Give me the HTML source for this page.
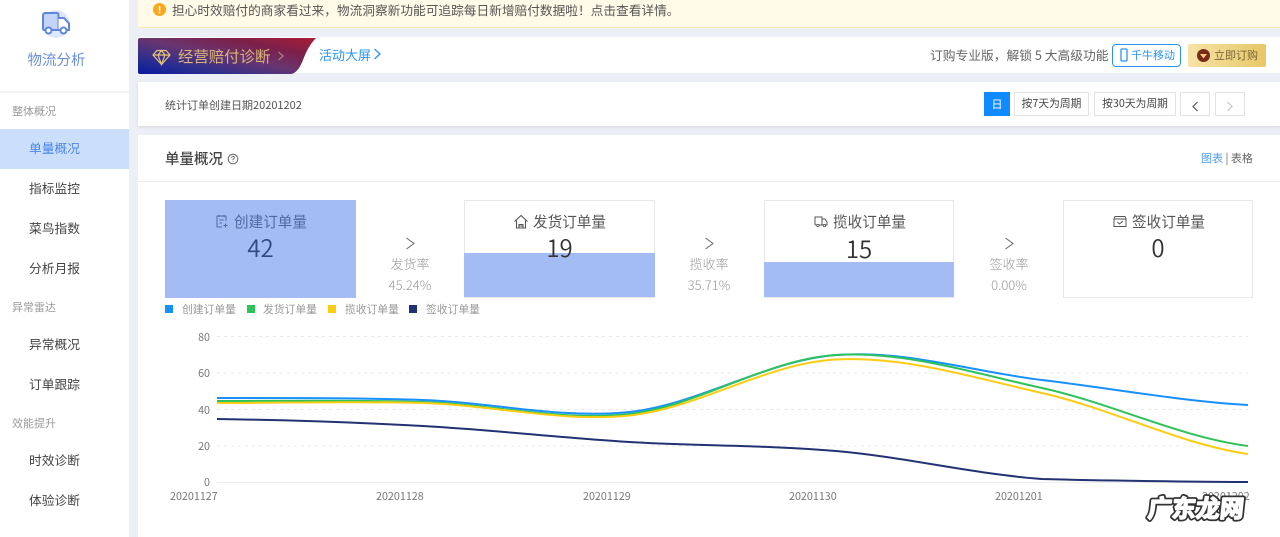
<!DOCTYPE html>
<html lang="zh-CN"><head><meta charset="utf-8"><title>物流分析</title>
<style>
html,body{margin:0;padding:0}
body{width:1280px;height:537px;overflow:hidden;position:relative;background:#eceff5;font-family:"Noto Sans CJK SC","Liberation Sans",sans-serif;color:#444}
#w{position:absolute;left:0;top:0;width:1280px;height:537px;overflow:hidden;filter:blur(.3px)}
.a{position:absolute;white-space:nowrap}
.c{text-align:center}
.side{left:0;top:0;width:129px;height:537px;background:#fff}
.mi{left:0;width:129px;height:40px;line-height:38px;font-size:12.75px;color:#444;text-indent:29px}
.gr{left:12px;font-size:11px;color:#9b9b9b;line-height:14px}
.panel{background:#fff}
.btn{border:1px solid #e3e3e3;background:#fff;font-size:10.75px;line-height:22px;height:22px;text-align:center;color:#444;box-sizing:content-box}
.card{box-sizing:border-box;width:191px;height:98px;top:200px;border:1px solid #e8e8e8;background:#fff}
.fill{background:#a3bdf4}
.ct{font-size:14.6px;color:#555;line-height:18px}
.num{font-size:24px;color:#333;line-height:28px;width:191px;text-align:center;font-weight:350}
.rt{font-size:13px;color:#999;width:80px;text-align:center;line-height:16px;font-weight:300}
.ax{font-size:10.75px;color:#777;line-height:13px}
.lg{font-size:10.8px;color:#999;line-height:14px;top:302px}
.sq{width:8px;height:8px;top:305px}
</style></head><body><div id="w">

<div class="a side"></div>
<svg class="a" style="left:40px;top:9px" width="32" height="32" viewBox="0 0 32 32">
<circle cx="16" cy="15" r="14" fill="#dfe8fa"/>
<path d="M3 6.500Q3 4 5.500 4H17Q18.500 4 18.500 6V21H4.500Q3 21 3 19.500Z" fill="#c3d4f6" stroke="#5f86d8" stroke-width="2"/>
<path d="M18.500 9H24L29 14.500V21H18.500" fill="#fff" stroke="#5f86d8" stroke-width="2"/>
<circle cx="8.500" cy="21.500" r="3" fill="#fff" stroke="#5f86d8" stroke-width="2"/>
<circle cx="23.500" cy="21.500" r="3" fill="#fff" stroke="#5f86d8" stroke-width="2"/>
</svg>
<div class="a c" style="left:0;width:113px;top:51px;font-size:14.500px;line-height:17px;color:#6b8fd9">物流分析</div>
<div class="a" style="left:0;top:91px;width:129px;height:2px;background:#f2f3f5"></div>
<div class="a gr" style="top:104px">整体概况</div>
<div class="a mi" style="top:129px;background:#cbdffa;color:#4c87ea">单量概况</div>
<div class="a mi" style="top:169px">指标监控</div>
<div class="a mi" style="top:209px">菜鸟指数</div>
<div class="a mi" style="top:249px">分析月报</div>
<div class="a gr" style="top:300px">异常雷达</div>
<div class="a mi" style="top:325px">异常概况</div>
<div class="a mi" style="top:365px">订单跟踪</div>
<div class="a gr" style="top:416px">效能提升</div>
<div class="a mi" style="top:441px">时效诊断</div>
<div class="a mi" style="top:481px">体验诊断</div>

<div class="a" style="left:138px;top:0;width:1142px;height:27px;background:#fffbe8;border-bottom:1px solid #fbe9ae"></div>
<svg class="a" style="left:153px;top:3px" width="13" height="13" viewBox="0 0 13 13"><circle cx="6.500" cy="6.500" r="6.500" fill="#f9a81e"/><rect x="5.800" y="2.800" width="1.500" height="5" fill="#fff"/><rect x="5.800" y="8.800" width="1.500" height="1.500" fill="#fff"/></svg>
<div class="a" style="left:172px;top:2px;font-size:12.7px;line-height:16px;color:#555">担心时效赔付的商家看过来，物流洞察新功能可追踪每日新增赔付数据啦！点击查看详情。</div>

<div class="a panel" style="left:138px;top:37px;width:1142px;height:36px"></div>
<svg class="a" style="left:138px;top:38px" width="180" height="36" viewBox="0 0 180 36">
<defs><linearGradient id="g" x1="0" y1="1" x2="1" y2="0"><stop offset="0" stop-color="#0a189f"/><stop offset=".22" stop-color="#2a2e90"/><stop offset=".5" stop-color="#69356f"/><stop offset=".75" stop-color="#7d1f48"/><stop offset="1" stop-color="#ab1e37"/></linearGradient></defs>
<path d="M2 0H178Q170 8 165 22Q160 35 153 36H2Q0 36 0 34V2Q0 0 2 0Z" fill="url(#g)"/>
<g fill="none" stroke="#e6c27c" stroke-width="1.200"><path d="M15 17L19 12.500H28L32 17L23.500 26.500Z"/><path d="M15 17H32M20 17L23.500 26.500L27 17L23.500 12.500L20 17"/></g>
</svg>
<div class="a" style="left:178px;top:46px;font-size:15.4px;line-height:20px;color:#d8b678">经营赔付诊断</div>
<svg class="a" style="left:277px;top:51px" width="8" height="10" viewBox="0 0 8 10"><path d="M1.500 1L6 5L1.500 9" fill="none" stroke="#b58f8f" stroke-width="1.100"/></svg>
<div class="a" style="left:319px;top:46px;font-size:13px;line-height:17px;color:#2a94f3">活动大屏</div>
<svg class="a" style="left:373px;top:48px" width="9" height="12" viewBox="0 0 9 12"><path d="M1.500 1L7 6L1.500 11" fill="none" stroke="#2a94f3" stroke-width="1.300"/></svg>

<div class="a" style="left:930px;top:46px;font-size:12.75px;line-height:17px;color:#666">订购专业版，解锁 5 大高级功能</div>
<div class="a" style="left:1112px;top:44px;width:67px;height:21px;border:1px solid #2a94f3;border-radius:4px;background:#fff"></div>
<svg class="a" style="left:1120px;top:48px" width="8" height="14" viewBox="0 0 8 14"><rect x="1" y="1" width="6" height="12" rx="1" fill="none" stroke="#2a94f3" stroke-width="1.300"/></svg>
<div class="a" style="left:1131px;top:48px;font-size:11px;line-height:15px;color:#2a94f3">千牛移动</div>
<div class="a" style="left:1188px;top:44px;width:78px;height:23px;border-radius:2px;background:linear-gradient(90deg,#f6e3a6,#e7c768)"></div>
<svg class="a" style="left:1197px;top:49px" width="13" height="13" viewBox="0 0 13 13"><circle cx="6.500" cy="6.500" r="6.500" fill="#7a2a18"/><path d="M3 5L6.500 9.500L10 5Z" fill="#f2cf7c"/></svg>
<div class="a" style="left:1214px;top:48px;font-size:11px;line-height:15px;color:#7a6534">立即订购</div>

<div class="a panel" style="left:138px;top:82px;width:1142px;height:44px;box-shadow:0 1px 3px rgba(0,0,0,.1)"></div>
<div class="a" style="left:165px;top:98px;font-size:11px;line-height:15px;color:#555">统计订单创建日期20201202</div>
<div class="a c" style="left:984px;top:92px;width:26px;height:24px;line-height:24px;background:#0f8bff;color:#fff;font-size:11px">日</div>
<div class="a btn" style="left:1014px;top:92px;width:73px">按7天为周期</div>
<div class="a btn" style="left:1094px;top:92px;width:80px">按30天为周期</div>
<div class="a btn" style="left:1180px;top:92px;width:28px"></div>
<div class="a btn" style="left:1215px;top:92px;width:28px"></div>
<svg class="a" style="left:1191px;top:101px" width="8" height="11" viewBox="0 0 8 11"><path d="M6.500 1L2 5.500L6.500 10" fill="none" stroke="#555" stroke-width="1.200"/></svg>
<svg class="a" style="left:1226px;top:101px" width="8" height="11" viewBox="0 0 8 11"><path d="M1.500 1L6 5.500L1.500 10" fill="none" stroke="#c4c4c4" stroke-width="1.200"/></svg>

<div class="a panel" style="left:138px;top:135px;width:1142px;height:402px"></div>
<div class="a" style="left:165px;top:150px;font-size:14.5px;line-height:18px;font-weight:500;color:#444">单量概况</div>
<svg class="a" style="left:227px;top:153px" width="12" height="12" viewBox="0 0 12 12"><circle cx="6" cy="6" r="4.800" fill="none" stroke="#666" stroke-width="1"/><path d="M4.500 4.800Q4.800 3.400 6 3.400Q7.500 3.500 7.400 4.800Q7.300 5.600 6 6.300V7" fill="none" stroke="#666" stroke-width=".9"/><rect x="5.600" y="7.800" width=".9" height=".9" fill="#666"/></svg>
<div class="a" style="left:1201px;top:151px;font-size:11px;line-height:14px;color:#4c9df0">图表<span style="color:#666"> | 表格</span></div>
<div class="a" style="left:138px;top:181px;width:1142px;height:1px;background:#eeeeee"></div>

<div class="a card" style="left:165px;background:#a3bdf4;border-color:#a3bdf4"></div>
<div class="a card" style="left:464px"></div>
<div class="a fill" style="left:464px;top:253px;width:191px;height:44px"></div>
<div class="a card" style="left:764px;width:190px"></div>
<div class="a fill" style="left:764px;top:262px;width:190px;height:35px"></div>
<div class="a card" style="left:1063px;width:190px"></div>

<svg class="a" style="left:215px;top:214px" width="14" height="15" viewBox="0 0 14 15"><path d="M11 7V2H2V13H7M4 1V3M9 1V3M4.500 6H8.500M4.500 9H7M8.500 11.500H12.500M10.500 9.500V13.500" fill="none" stroke="#51689f" stroke-width="1"/></svg>
<div class="a ct" style="left:234px;top:213px;color:#51689f">创建订单量</div>
<div class="a num" style="left:165px;top:233px;color:#2d4a85">42</div>

<svg class="a" style="left:513px;top:214px" width="16" height="15" viewBox="0 0 16 15"><path d="M1.500 7.500L8 1.500L14.500 7.500M3.500 6.500V14H12.500V6.500M6 14V10.500H10V14M6 12H10" fill="none" stroke="#555" stroke-width="1.100"/></svg>
<div class="a ct" style="left:533px;top:213px">发货订单量</div>
<div class="a num" style="left:464px;top:233px;color:#333">19</div>

<svg class="a" style="left:814px;top:215px" width="14" height="13" viewBox="0 0 14 13"><path d="M1 2H8V10H2Q1 10 1 9ZM8 4H11L13 7V10H8" fill="none" stroke="#555" stroke-width="1"/><circle cx="4" cy="10.500" r="1.200" fill="#fff" stroke="#555" stroke-width=".8"/><circle cx="10.500" cy="10.500" r="1.200" fill="#fff" stroke="#555" stroke-width=".8"/></svg>
<div class="a ct" style="left:833px;top:213px">揽收订单量</div>
<div class="a num" style="left:764px;top:234px;width:190px;color:#333">15</div>

<svg class="a" style="left:1113px;top:215px" width="14" height="13" viewBox="0 0 14 13"><path d="M2 1.500H12L13 4V11.500H1V4ZM1 4H13M4.500 7L6.500 9L10 6" fill="none" stroke="#555" stroke-width="1"/></svg>
<div class="a ct" style="left:1132px;top:213px">签收订单量</div>
<div class="a num" style="left:1063px;top:233px;width:190px;color:#333">0</div>

<svg class="a" style="left:405px;top:237px" width="11" height="13" viewBox="0 0 11 13"><path d="M1.500 1L9 6.500L1.500 12" fill="none" stroke="#666" stroke-width="1"/></svg>
<div class="a rt" style="left:370px;top:256px">发货率</div>
<div class="a rt" style="left:370px;top:277px">45.24%</div>
<svg class="a" style="left:704px;top:237px" width="11" height="13" viewBox="0 0 11 13"><path d="M1.500 1L9 6.500L1.500 12" fill="none" stroke="#666" stroke-width="1"/></svg>
<div class="a rt" style="left:669px;top:256px">揽收率</div>
<div class="a rt" style="left:669px;top:277px">35.71%</div>
<svg class="a" style="left:1004px;top:237px" width="11" height="13" viewBox="0 0 11 13"><path d="M1.500 1L9 6.500L1.500 12" fill="none" stroke="#666" stroke-width="1"/></svg>
<div class="a rt" style="left:969px;top:256px">签收率</div>
<div class="a rt" style="left:969px;top:277px">0.00%</div>

<div class="a sq" style="left:165px;background:#1890ff"></div><div class="a lg" style="left:182px">创建订单量</div>
<div class="a sq" style="left:247px;background:#2fc25b"></div><div class="a lg" style="left:263px">发货订单量</div>
<div class="a sq" style="left:328px;background:#facc14"></div><div class="a lg" style="left:345px">揽收订单量</div>
<div class="a sq" style="left:409px;background:#223273"></div><div class="a lg" style="left:426px">签收订单量</div>

<svg class="a" style="left:0;top:0" width="1280" height="537" viewBox="0 0 1280 537">
<g stroke="#e8e8e8" stroke-width="1" stroke-dasharray="3 4"><path d="M217 336.500H1248M217 373H1248M217 409.500H1248M217 446H1248"/></g>
<path d="M217 482.500H1248" stroke="#eeeeee" stroke-width="1"/>
<g fill="none" stroke-width="2">
<path stroke="#1890ff" d="M217 398C286 398 354 397.700 423 400C492 402.300 561 419.300 629.500 412C698 404.700 767 360.300 836 355C905 349.700 973 371.800 1042 380C1111 388.200 1179 401 1248 405"/>
<path stroke="#2fc25b" d="M217 401C286 401 354 399.800 423 402C492 404.200 561 421.700 629.500 414C698 406.300 767 359 836 355C905 351 973 373 1042 388C1111 403 1179 437 1248 446"/>
<path stroke="#facc14" d="M217 403C286 403 354 401 423 403C492 405 561 422.500 629.500 415.500C698 408.500 767 363 836 359.500C905 356 973 377.500 1042 393C1111 408.500 1179 444 1248 454"/>
<path stroke="#223273" d="M217 419C286 420 354 422.200 423 426C492 429.800 561 437.800 629.500 442C698 446.200 767 445 836 451C905 457 973 474 1042 479C1111 481 1179 481.500 1248 482"/>
</g></svg>
<div class="a ax" style="left:190px;top:331px;width:20px;text-align:right">80</div>
<div class="a ax" style="left:190px;top:367px;width:20px;text-align:right">60</div>
<div class="a ax" style="left:190px;top:404px;width:20px;text-align:right">40</div>
<div class="a ax" style="left:190px;top:440px;width:20px;text-align:right">20</div>
<div class="a ax" style="left:190px;top:476px;width:20px;text-align:right">0</div>
<div class="a ax" style="left:170px;top:490px">20201127</div>
<div class="a ax" style="left:376px;top:490px">20201128</div>
<div class="a ax" style="left:583px;top:490px">20201129</div>
<div class="a ax" style="left:789px;top:490px">20201130</div>
<div class="a ax" style="left:995px;top:490px">20201201</div>
<div class="a ax" style="left:1202px;top:490px">20201202</div>

<svg class="a" style="left:1140px;top:490px" width="110" height="38" viewBox="0 0 110 38" font-family="Noto Sans CJK SC, sans-serif" font-size="24" font-weight="700">
<text x="7" y="27" transform="skewX(-6) translate(3 0)" fill="#fff" stroke="#333" stroke-width="5" stroke-linejoin="round">广东龙网</text>
<text x="7" y="27" transform="skewX(-6) translate(3 0)" fill="#fff" stroke="#fff" stroke-width="1.500" stroke-linejoin="round">广东龙网</text>
</svg>
</div></body></html>
